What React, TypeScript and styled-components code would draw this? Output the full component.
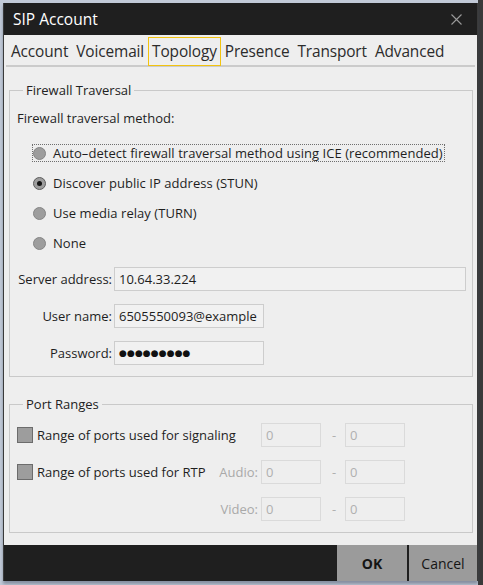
import React from "react";
import styled, { createGlobalStyle } from "styled-components";

const Global = createGlobalStyle`
  html, body { margin: 0; padding: 0; }
  body {
    width: 483px;
    height: 585px;
    overflow: hidden;
    background: linear-gradient(to right, #c2cad8 0, #c2cad8 478px, #3a3a3a 478px);
    font-family: "Open Sans", "Noto Sans", "DejaVu Sans", sans-serif;
  }
  * { box-sizing: border-box; }
`;

const Page = styled.div`
  padding: 3px 0 0 3px;
`;

const Dialog = styled.div`
  width: 475px;
  height: 578px;
  display: flex;
  flex-direction: column;
  background: #eeeeee;
  border-left: 1px solid #3a3a3a;
  border-right: 1px solid #3a3a3a;
  box-shadow: 0 3px 3px rgba(60, 70, 90, 0.45);
`;

const TitleBar = styled.div`
  height: 32px;
  flex: none;
  display: flex;
  align-items: center;
  justify-content: space-between;
  padding: 0 15px 0 9px;
  background: #1f1f1f;
  color: #ffffff;
  font-size: 15.5px;
`;

const TabBar = styled.div`
  height: 32px;
  flex: none;
  display: flex;
  align-items: flex-end;
  margin: 0 2px;
  padding-left: 1px;
  border-bottom: 2px solid #cbcbcb;
`;

const Tab = styled.div<{ $active?: boolean }>`
  height: 29px;
  margin-bottom: -1px;
  padding: 0 3px;
  display: flex;
  align-items: center;
  border: 1px solid ${(p) => (p.$active ? "#f2c30f" : "transparent")};
  color: #2b2b2b;
  font-size: 15.4px;
  letter-spacing: -0.12px;
`;

const Content = styled.div`
  flex: 1;
  display: flex;
  flex-direction: column;
  gap: 19px;
  padding: 15px 4px 0 5px;
  font-size: 13px;
  color: #1e1e1e;
`;

const Group = styled.fieldset<{ $pad: string }>`
  margin: 0;
  padding: ${(p) => p.$pad};
  border: 1px solid #c9c9c9;
  min-width: 0;
`;

const Legend = styled.legend`
  margin-left: 6px;
  padding: 0 3px;
  line-height: 16px;
  color: #222;
`;

const Caption = styled.div`
  line-height: 16px;
  margin-top: 12px;
`;

const RadioList = styled.div`
  display: flex;
  flex-direction: column;
  gap: 14px;
  margin: 19px 0 16px 16px;
`;

const RadioRow = styled.div<{ $focus?: boolean }>`
  display: flex;
  align-items: center;
  gap: 7px;
  height: 16px;
  width: fit-content;
  padding-right: 1px;
  letter-spacing: 0.05px;
  outline: ${(p) => (p.$focus ? "1px dotted #6e6e6e" : "none")};
`;

const RadioDot = styled.span<{ $checked?: boolean }>`
  width: 13px;
  height: 13px;
  border-radius: 50%;
  background: #9d9d9d;
  border: 1px solid ${(p) => (p.$checked ? "#5e5e5e" : "#858585")};
  display: flex;
  align-items: center;
  justify-content: center;
  flex: none;
  &::after {
    content: "";
    display: ${(p) => (p.$checked ? "block" : "none")};
    width: 5px;
    height: 5px;
    border-radius: 50%;
    background: #151515;
  }
`;

const FormGrid = styled.div`
  display: grid;
  grid-template-columns: 95px 1fr;
  column-gap: 2px;
  row-gap: 13px;
  align-items: center;
  padding-right: 6px;
`;

const FieldLabel = styled.span<{ $disabled?: boolean }>`
  text-align: right;
  color: ${(p) => (p.$disabled ? "#a9a9a9" : "#1e1e1e")};
  white-space: nowrap;
`;

const Field = styled.div<{ $width?: string; $disabled?: boolean }>`
  height: 24px;
  width: ${(p) => p.$width || "auto"};
  display: flex;
  align-items: center;
  padding-left: 4px;
  background: ${(p) => (p.$disabled ? "#eeeeee" : "#f1f1f1")};
  border: 1px solid ${(p) => (p.$disabled ? "#dadada" : "#cdcdcd")};
  color: ${(p) => (p.$disabled ? "#b0b0b0" : "#1e1e1e")};
  white-space: nowrap;
  overflow: hidden;
`;

const Dots = styled.span`
  font-family: "DejaVu Sans", sans-serif;
  font-size: 9px;
  letter-spacing: 0.1px;
  color: #111;
`;

const PortGrid = styled.div`
  display: grid;
  grid-template-columns: 199px 45px 60px 24px 60px;
  row-gap: 13px;
  align-items: center;
`;

const CheckRow = styled.div<{ $span?: boolean }>`
  display: flex;
  align-items: center;
  gap: 4px;
  white-space: nowrap;
  grid-column: ${(p) => (p.$span ? "1 / span 2" : "1")};
`;

const CheckBox = styled.span`
  width: 16px;
  height: 16px;
  flex: none;
  background: #9d9d9d;
  border: 1px solid #6c6c6c;
`;

const SubLabel = styled(FieldLabel)`
  grid-column: 2;
  padding-right: 3px;
`;

const Dash = styled.span`
  text-align: center;
  color: #b0b0b0;
  padding-left: 2px;
`;

const ButtonBar = styled.div`
  height: 36px;
  flex: none;
  display: flex;
  justify-content: flex-end;
  gap: 2px;
  margin-top: 12px;
  background: #1f1f1f;
`;

const Button = styled.button<{ $primary?: boolean }>`
  width: ${(p) => (p.$primary ? "70px" : "68px")};
  height: 100%;
  border: none;
  margin: 0;
  padding: 0;
  background: #9b9b9b;
  color: #151515;
  font-family: inherit;
  font-size: 14px;
  font-weight: ${(p) => (p.$primary ? 700 : 400)};
`;

const CloseIcon = () => (
  <svg width="11" height="11" viewBox="0 0 11 11">
    <path d="M0.5 0.5 L10.5 10.5 M10.5 0.5 L0.5 10.5" stroke="#9a9a9a" strokeWidth="1.1" />
  </svg>
);

const tabs = ["Account", "Voicemail", "Topology", "Presence", "Transport", "Advanced"];

const radios = [
  { label: "Auto–detect firewall traversal method using ICE (recommended)", focus: true },
  { label: "Discover public IP address (STUN)", checked: true },
  { label: "Use media relay (TURN)" },
  { label: "None" },
];

export default function App() {
  return (
    <Page>
      <Global />
      <Dialog>
        <TitleBar>
          <span>SIP Account</span>
          <CloseIcon />
        </TitleBar>
        <TabBar>
          {tabs.map((t) => (
            <Tab key={t} $active={t === "Topology"}>
              {t}
            </Tab>
          ))}
        </TabBar>
        <Content>
          <Group $pad="0 0 11px 7px">
            <Legend>Firewall Traversal</Legend>
            <Caption>Firewall traversal method:</Caption>
            <RadioList>
              {radios.map((r) => (
                <RadioRow key={r.label} $focus={r.focus}>
                  <RadioDot $checked={r.checked} />
                  <span>{r.label}</span>
                </RadioRow>
              ))}
            </RadioList>
            <FormGrid>
              <FieldLabel>Server address:</FieldLabel>
              <Field>10.64.33.224</Field>
              <FieldLabel>User name:</FieldLabel>
              <Field $width="150px">6505550093@example</Field>
              <FieldLabel>Password:</FieldLabel>
              <Field $width="150px">
                <Dots>●●●●●●●●●</Dots>
              </Field>
            </FormGrid>
          </Group>
          <Group $pad="11px 0 11px 7px">
            <Legend>Port Ranges</Legend>
            <PortGrid>
              <CheckRow $span>
                <CheckBox />
                <span>Range of ports used for signaling</span>
              </CheckRow>
              <Field $disabled>0</Field>
              <Dash>-</Dash>
              <Field $disabled>0</Field>

              <CheckRow>
                <CheckBox />
                <span>Range of ports used for RTP</span>
              </CheckRow>
              <SubLabel $disabled>Audio:</SubLabel>
              <Field $disabled>0</Field>
              <Dash>-</Dash>
              <Field $disabled>0</Field>

              <SubLabel $disabled>Video:</SubLabel>
              <Field $disabled>0</Field>
              <Dash>-</Dash>
              <Field $disabled>0</Field>
            </PortGrid>
          </Group>
        </Content>
        <ButtonBar>
          <Button $primary>OK</Button>
          <Button>Cancel</Button>
        </ButtonBar>
      </Dialog>
    </Page>
  );
}
